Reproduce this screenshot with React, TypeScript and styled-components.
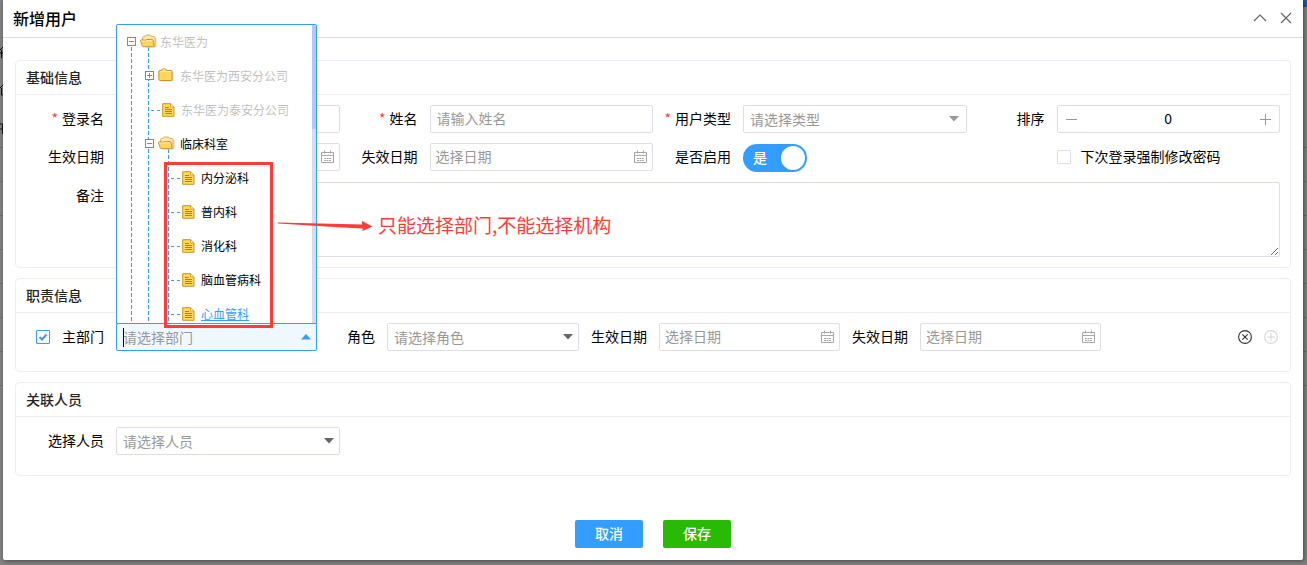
import React, { useState } from 'react';
import styled, { createGlobalStyle, css } from 'styled-components';

const color = {
  primary: '#339eff',
  success: '#28ba05',
  text: '#000',
  heading: '#262626',
  placeholder: '#999',
  border: '#dcdfe6',
  cardBorder: '#ebedf5',
  mark: '#ff3c38',
};

const Global = createGlobalStyle`
  * { box-sizing: border-box; }
  body {
    margin: 0;
    background: #808080;
    color: ${color.text};
    font: 14px/20px "Noto Sans CJK SC", sans-serif;
  }
  input, select, textarea, button { font: inherit; color: inherit; }
`;

/* ---------- page behind the dialog ---------- */

const Page = styled.div`
  position: relative;
  min-height: 100vh;
  padding: 0 4px 5px 3px;
  overflow: hidden;
`;

const Underlay = styled.div`
  position: absolute;
  inset: 0;
  background: repeating-linear-gradient(
    to bottom,
    transparent 0 33px,
    #6d6d6d 33px 34px
  ) 0 114px / 100% 272px no-repeat;
`;

const TopBar = styled.div`
  height: 7px;
  margin-left: 50%;
  background: #1b5a96;
`;

const EdgeMarks = styled.svg`
  position: absolute;
  left: 0;
  top: 44px;
`;

/* ---------- dialog ---------- */

const Dialog = styled.main`
  position: relative;
  background: #fff;
  border-radius: 0 0 2px 2px;
  box-shadow: 1px 1px 4px rgba(0, 0, 0, 0.45);
`;

const DialogHeader = styled.header`
  display: flex;
  align-items: center;
  justify-content: space-between;
  height: 38px;
  padding: 0 10px 2px;
  border-bottom: 1px solid #dcdcdc;
`;

const DialogTitle = styled.h1`
  margin: 0;
  font-size: 16px;
  line-height: 24px;
  font-weight: 500;
`;

const HeaderActions = styled.div`
  display: flex;
  gap: 12px;
`;

const IconButton = styled.button<{ $tone?: string }>`
  display: flex;
  align-items: center;
  justify-content: center;
  width: 14px;
  height: 16px;
  padding: 0;
  border: 0;
  background: none;
  color: ${(p) => p.$tone ?? '#666'};
  cursor: pointer;
`;

const DialogBody = styled.form`
  display: flex;
  flex-direction: column;
  gap: 10px;
  padding: 22px 12px 12px;
`;

const Card = styled.section`
  border: 1px solid ${color.cardBorder};
  border-radius: 4px;
`;

const CardTitle = styled.h2`
  margin: 0;
  padding: 0 10px;
  height: 34px;
  border-bottom: 1px solid ${color.cardBorder};
  color: ${color.heading};
  font-size: 14px;
  line-height: 33px;
  font-weight: 500;
`;

const FieldGrid = styled.div`
  display: grid;
  grid-template-columns: repeat(4, minmax(0, 1fr));
  gap: 10px 0;
  padding: 10px;
`;

const SingleRow = styled(FieldGrid)`
  padding-bottom: 20px;
`;

const DutyRow = styled.div`
  display: grid;
  grid-template-columns:
    90px minmax(0, 201fr) 70px minmax(0, 192fr) 80px minmax(0, 181fr)
    80px minmax(0, 181fr) 179px;
  padding: 10px 10px 20px;
`;

const Field = styled.div<{ $wide?: boolean }>`
  display: grid;
  grid-template-columns: 90px minmax(0, 1fr);
  ${(p) => p.$wide && css`grid-column: 1 / -1;`}
`;

const Label = styled.label<{ $required?: boolean }>`
  height: 28px;
  padding-right: 12px;
  line-height: 26px;
  text-align: right;
  white-space: nowrap;
  ${(p) =>
    p.$required &&
    css`
      &::before {
        content: '*';
        margin-right: 4px;
        color: #f5403c;
      }
    `}
`;

/* ---------- controls ---------- */

const controlBox = css`
  display: block;
  width: 100%;
  height: 28px;
  border: 1px solid ${color.border};
  border-radius: 2px;
  background: #fff;
  outline: 0;
  &::placeholder { color: ${color.placeholder}; opacity: 1; }
`;

const ControlWrap = styled.div`
  position: relative;
  height: 28px;
`;

const TextInput = styled.input`
  ${controlBox}
  padding: 0 6px 2px;
`;

const DateInput = styled.input`
  ${controlBox}
  padding: 0 28px 2px 5px;
`;

const SelectInput = styled.select`
  ${controlBox}
  padding: 0 24px 0 6px;
  appearance: none;
  color: ${color.placeholder};
`;

const ComboInput = styled.input`
  ${controlBox}
  padding: 0 24px 0 6px;
  border-color: ${color.primary};
  background: #f0f8ff;
`;

const Caret = styled.span`
  position: absolute;
  left: 7px;
  top: 5px;
  width: 1px;
  height: 19px;
  background: #000;
`;

const Suffix = styled.span<{ $tone: string; $right: number }>`
  position: absolute;
  top: 0;
  right: ${(p) => p.$right}px;
  display: flex;
  align-items: center;
  height: 28px;
  color: ${(p) => p.$tone};
  pointer-events: none;
`;

const NoteArea = styled.textarea`
  ${controlBox}
  height: 75px;
  padding: 4px 6px;
  resize: both;
`;

const Stepper = styled.div`
  display: flex;
  align-items: center;
  height: 28px;
  padding: 0 7px;
  border: 1px solid ${color.border};
  border-radius: 2px;
`;

const StepperInput = styled.input`
  flex: 1;
  min-width: 0;
  padding: 0 0 2px;
  border: 0;
  outline: 0;
  background: none;
  text-align: center;
`;

const Tick = styled.input`
  appearance: none;
  flex: none;
  width: 14px;
  height: 14px;
  margin: 0;
  border: 1px solid ${color.border};
  border-radius: 1px;
  background: #fff;
  &:checked {
    border-color: ${color.primary};
    background: url("data:image/svg+xml,%3Csvg xmlns='http://www.w3.org/2000/svg' viewBox='0 0 12 12'%3E%3Cpath d='M2.5 6l2.5 2.5L9.5 3.500' fill='none' stroke='%23339eff' stroke-width='2'/%3E%3C/svg%3E");
  }
`;

const TickText = styled.span`
  padding-bottom: 2px;
`;

const TickLabel = styled.label`
  grid-column: 2;
  display: flex;
  align-items: center;
  gap: 10px;
  height: 28px;
  white-space: nowrap;
`;

const DutyLabel = styled.label`
  display: flex;
  align-items: center;
  justify-content: flex-end;
  gap: 12px;
  height: 28px;
  padding-right: 12px;
  white-space: nowrap;
`;

const Switch = styled.label`
  position: relative;
  width: 64px;
  height: 28px;
  margin-top: 1px;
  padding: 0 10px;
  border-radius: 14px;
  background: ${color.primary};
  color: #fff;
  line-height: 26px;
  font-weight: 500;
`;

const SwitchInput = styled.input`
  appearance: none;
  position: absolute;
  top: 2px;
  right: 2px;
  width: 24px;
  height: 24px;
  margin: 0;
  border-radius: 12px;
  background: #fff;
`;

const RowActions = styled.div`
  display: flex;
  align-items: center;
  justify-content: flex-end;
  gap: 12px;
  padding-right: 2px;
`;

const Footer = styled.footer`
  display: flex;
  justify-content: center;
  gap: 20px;
  padding-top: 34px;
`;

const Button = styled.button<{ $bg: string }>`
  width: 68px;
  height: 28px;
  padding: 0 0 2px;
  border: 0;
  border-radius: 2px;
  background: ${(p) => p.$bg};
  color: #fff;
  font-weight: 500;
  cursor: pointer;
`;

/* ---------- department tree ---------- */

const TreePanel = styled.div`
  position: absolute;
  z-index: 2;
  left: 0;
  right: 0;
  bottom: 27px;
  display: flex;
  height: 300px;
  border: 1px solid ${color.primary};
  border-radius: 2px 2px 0 0;
  background: #fff;
  overflow: hidden;
`;

const TreeScroll = styled.div`
  flex: 1;
  min-width: 0;
  overflow: hidden;
`;

const ScrollTrack = styled.div`
  width: 4px;
  background: #d3dcf0;
`;

const ScrollThumb = styled.div`
  height: 104px;
  background: #b0c9f8;
`;

const TreeList = styled.ul<{ $indent: number }>`
  margin: 0;
  padding: 0 0 0 ${(p) => p.$indent}px;
  list-style: none;
`;

const guideLine = css`
  content: '';
  position: absolute;
  top: 22px;
  bottom: 0;
  width: 1px;
  background: repeating-linear-gradient(${color.primary} 0 4px, transparent 4px 6px);
`;

const TreeItem = styled.li<{ $guide?: number }>`
  position: relative;
  ${(p) =>
    p.$guide !== undefined &&
    css`
      &::before {
        ${guideLine}
        left: ${p.$guide}px;
      }
    `}
`;

const RootItem = styled(TreeItem)`
  &::after {
    ${guideLine}
    left: 4px;
  }
`;

const TreeRow = styled.div<{ $disabled?: boolean; $active?: boolean }>`
  position: relative;
  z-index: 1;
  display: flex;
  align-items: center;
  height: 34px;
  font-size: 12px;
  color: ${(p) => (p.$disabled ? '#bfbfbf' : p.$active ? color.primary : '#000')};
  text-decoration: ${(p) => (p.$active ? 'underline' : 'none')};
  white-space: nowrap;
  svg { flex: none; }
`;

const TreeText = styled.span<{ $gap: number }>`
  margin-left: ${(p) => p.$gap}px;
  line-height: 18px;
`;

const Expander = styled.button<{ $open?: boolean }>`
  flex: none;
  width: 9px;
  height: 9px;
  margin: 0 4px 2px 0;
  padding: 0;
  border: 1px solid ${color.primary};
  background:
    linear-gradient(${color.primary}, ${color.primary}) 1px 3px / 5px 1px no-repeat,
    ${(p) => !p.$open && `linear-gradient(${color.primary}, ${color.primary}) 3px 1px / 1px 5px no-repeat,`}
    #fff;
`;

const LeafDash = styled.span`
  width: 9px;
  height: 1px;
  margin: 0 2px 0 1px;
  background: repeating-linear-gradient(to right, ${color.primary} 0 3px, transparent 3px 6px);
`;

/* ---------- annotation ---------- */

const MarkBox = styled.div`
  position: absolute;
  z-index: 3;
  left: 48px;
  bottom: 23px;
  width: 109px;
  height: 166px;
  border: 3px solid ${color.mark};
  pointer-events: none;
`;

const MarkNote = styled.div`
  position: absolute;
  z-index: 3;
  left: 162px;
  bottom: 112px;
  display: flex;
  align-items: center;
  gap: 5px;
  color: ${color.mark};
  font-size: 19px;
  line-height: 28px;
  white-space: nowrap;
  pointer-events: none;
`;

/* ---------- icons ---------- */

const FolderSvg = styled.svg`
  margin-bottom: 2px;
`;

const Arrow = ({ up }: { up?: boolean }) => (
  <svg width="10" height="6" viewBox="0 0 10 6" aria-hidden="true">
    <path d={up ? 'M0 5.500L5 0l5 5.500z' : 'M0 0h10L5 5.500z'} fill="currentColor" />
  </svg>
);

const Calendar = () => (
  <svg width="13" height="14" viewBox="0 0 13 14" fill="none" stroke="#a6a6a6" aria-hidden="true">
    <path d="M.5 2.500h12v10H.5zM.5 5.500h12M3.500.5v3M9.500.5v3" />
    <path d="M3 8.500h7M3 10.500h7" strokeDasharray="2 .5" />
  </svg>
);

const FolderOpen = () => (
  <FolderSvg width="17" height="14" viewBox="0 0 17 14" aria-hidden="true">
    <path d="M16 4.500v8.500H5" fill="none" stroke="#ddd5c2" />
    <path d="M2.500 7V3.300L3.300 2.500 5 2.300 6.500 1h4l1 1.300 3 .4.6.7v8.300l-1 .8H9z" fill="#fbe6ae" stroke="#cda043" strokeWidth=".8" />
    <path d="M.4 6.400l.7-.6 4.400.4 1-.7h6l.5.5 1.200 6-.5.7H3l-.7-.5z" fill="#ffd65c" stroke="#bf8a24" strokeWidth=".8" />
    <path d="M1.500 7l4.400.2 1-.6h5.300" fill="none" stroke="#fff0b8" strokeWidth=".8" />
  </FolderSvg>
);

const Folder = () => (
  <FolderSvg width="16" height="14" viewBox="0 0 16 14" aria-hidden="true">
    <path d="M15 4v9H3" fill="none" stroke="#d9cfb6" />
    <path d="M.8 11.500V3.200L2 2.500h1.500L4.200 1h3.600l.8 1.500H13.500l.6.7v8.600l-.7.700H1.600z" fill="#ffd75e" stroke="#c08a26" strokeWidth=".9" />
    <path d="M2 3.600h11M4.800 2h2.800" stroke="#ffeeb0" strokeWidth=".8" />
  </FolderSvg>
);

const FileIcon = () => (
  <svg width="13" height="14" viewBox="0 0 13 14" aria-hidden="true">
    <path d="M.7.7H8.500L12 4v9.300H.7z" fill="#ffd75e" stroke="#c9971f" />
    <path d="M8.500.7V4H12" fill="#fff0b8" stroke="#c9971f" strokeWidth=".8" />
    <path d="M3 4.500h4M3 6.500h7M3 8.500h7M3 10.500h7" stroke="#b5820f" />
  </svg>
);

/* ---------- composed parts ---------- */

const DateBox = ({ id }: { id: string }) => (
  <ControlWrap>
    <DateInput id={id} placeholder="选择日期" />
    <Suffix $tone="#a6a6a6" $right={6}><Calendar /></Suffix>
  </ControlWrap>
);

const SelectBox = ({ id, text, muted }: { id: string; text: string; muted?: boolean }) => (
  <ControlWrap>
    <SelectInput id={id} defaultValue="">
      <option value="">{text}</option>
    </SelectInput>
    <Suffix $tone={muted ? '#999' : '#666'} $right={muted ? 8 : 6}><Arrow /></Suffix>
  </ControlWrap>
);

const departments = ['内分泌科', '普内科', '消化科', '脑血管病科', '心血管科'];

const DepartmentTree = () => (
  <TreePanel>
    <TreeScroll id="dept-tree">
      <TreeList $indent={10}>
        <RootItem $guide={21}>
          <TreeRow $disabled>
            <Expander type="button" $open aria-label="收起" />
            <FolderOpen />
            <TreeText $gap={3}>东华医为</TreeText>
          </TreeRow>
          <TreeList $indent={18}>
            <TreeItem>
              <TreeRow $disabled>
                <Expander type="button" aria-label="展开" />
                <Folder />
                <TreeText $gap={6}>东华医为西安分公司</TreeText>
              </TreeRow>
            </TreeItem>
            <TreeItem>
              <TreeList $indent={5}>
                <TreeRow as="li" $disabled>
                  <LeafDash />
                  <FileIcon />
                  <TreeText $gap={6}>东华医为泰安分公司</TreeText>
                </TreeRow>
              </TreeList>
            </TreeItem>
            <TreeItem $guide={23}>
              <TreeRow>
                <Expander type="button" $open aria-label="收起" />
                <FolderOpen />
                <TreeText $gap={5}>临床科室</TreeText>
              </TreeRow>
              <TreeList $indent={25}>
                {departments.map((name) => (
                  <TreeRow as="li" key={name} $active={name === '心血管科'}>
                    <LeafDash />
                    <FileIcon />
                    <TreeText $gap={6}>{name}</TreeText>
                  </TreeRow>
                ))}
              </TreeList>
            </TreeItem>
          </TreeList>
        </RootItem>
      </TreeList>
    </TreeScroll>
    <ScrollTrack><ScrollThumb /></ScrollTrack>
  </TreePanel>
);

export default function App() {
  const [order, setOrder] = useState(0);

  return (
    <Page>
      <Global />
      <Underlay>
        <TopBar />
        <EdgeMarks width="3" height="94" viewBox="0 0 3 94" stroke="#111" fill="none" aria-hidden="true">
          <path d="M0 6l3-3M1.500 6v8M0 9h3M0 44l3-3M1.500 44v7h2M0 80h2.500v10M0 85h2" />
        </EdgeMarks>
      </Underlay>
      <Dialog>
        <DialogHeader>
          <DialogTitle>新增用户</DialogTitle>
          <HeaderActions>
            <IconButton type="button" aria-label="折叠">
              <svg width="14" height="14" viewBox="0 0 14 14" fill="none" stroke="currentColor" strokeWidth="1.200">
                <path d="M1 10l6-6 6 6" />
              </svg>
            </IconButton>
            <IconButton type="button" aria-label="关闭">
              <svg width="14" height="14" viewBox="0 0 14 14" fill="none" stroke="currentColor" strokeWidth="1.200">
                <path d="M2 2l10 10M12 2L2 12" />
              </svg>
            </IconButton>
          </HeaderActions>
        </DialogHeader>

        <DialogBody>
          <Card>
            <CardTitle>基础信息</CardTitle>
            <FieldGrid>
              <Field>
                <Label $required htmlFor="login">登录名</Label>
                <TextInput id="login" />
              </Field>
              <Field>
                <Label $required htmlFor="name">姓名</Label>
                <TextInput id="name" placeholder="请输入姓名" />
              </Field>
              <Field>
                <Label $required htmlFor="type">用户类型</Label>
                <SelectBox id="type" text="请选择类型" muted />
              </Field>
              <Field>
                <Label htmlFor="order">排序</Label>
                <Stepper>
                  <IconButton type="button" $tone="#999" aria-label="减少" onClick={() => setOrder(order - 1)}>
                    <svg width="12" height="12" viewBox="0 0 12 12" stroke="currentColor"><path d="M0 6.500h11" /></svg>
                  </IconButton>
                  <StepperInput id="order" value={order} onChange={(e) => setOrder(Number(e.target.value) || 0)} />
                  <IconButton type="button" $tone="#999" aria-label="增加" onClick={() => setOrder(order + 1)}>
                    <svg width="12" height="12" viewBox="0 0 12 12" stroke="currentColor"><path d="M1 6.500h11M6.500 1v11" /></svg>
                  </IconButton>
                </Stepper>
              </Field>
              <Field>
                <Label htmlFor="start">生效日期</Label>
                <DateBox id="start" />
              </Field>
              <Field>
                <Label htmlFor="end">失效日期</Label>
                <DateBox id="end" />
              </Field>
              <Field>
                <Label htmlFor="enabled">是否启用</Label>
                <Switch>
                  是
                  <SwitchInput id="enabled" type="checkbox" role="switch" defaultChecked />
                </Switch>
              </Field>
              <Field>
                <TickLabel>
                  <Tick type="checkbox" />
                  <TickText>下次登录强制修改密码</TickText>
                </TickLabel>
              </Field>
              <Field $wide>
                <Label htmlFor="note">备注</Label>
                <NoteArea id="note" />
              </Field>
            </FieldGrid>
          </Card>

          <Card>
            <CardTitle>职责信息</CardTitle>
            <DutyRow>
              <DutyLabel>
                <Tick type="checkbox" defaultChecked />
                <TickText>主部门</TickText>
              </DutyLabel>
              <ControlWrap>
                <ComboInput
                  role="combobox"
                  aria-label="部门"
                  aria-expanded="true"
                  aria-controls="dept-tree"
                  placeholder="请选择部门"
                />
                <Caret />
                <Suffix $tone={color.primary} $right={6}><Arrow up /></Suffix>
                <DepartmentTree />
                <MarkBox />
                <MarkNote>
                  <svg width="95" height="14" viewBox="0 0 95 14" fill="currentColor" aria-hidden="true">
                    <path d="M0 4.500L84 6.500V3L94.500 8.500 84.500 13V10.500L60 9.200 0 5.500z" />
                  </svg>
                  只能选择部门,不能选择机构
                </MarkNote>
              </ControlWrap>
              <Label htmlFor="role">角色</Label>
              <SelectBox id="role" text="请选择角色" />
              <Label htmlFor="duty-start">生效日期</Label>
              <DateBox id="duty-start" />
              <Label htmlFor="duty-end">失效日期</Label>
              <DateBox id="duty-end" />
              <RowActions>
                <IconButton type="button" $tone="#333" aria-label="删除">
                  <svg width="14" height="14" viewBox="0 0 14 14" fill="none" stroke="currentColor" strokeWidth="1.100">
                    <circle cx="7" cy="7" r="6.400" />
                    <path d="M4.300 4.300l5.400 5.400M9.700 4.300l-5.400 5.400" />
                  </svg>
                </IconButton>
                <IconButton type="button" $tone="#d6d6d6" aria-label="添加">
                  <svg width="14" height="14" viewBox="0 0 14 14" fill="none" stroke="currentColor" strokeWidth="1.100">
                    <circle cx="7" cy="7" r="6.400" />
                    <path d="M3 7h8M7 3v8" />
                  </svg>
                </IconButton>
              </RowActions>
            </DutyRow>
          </Card>

          <Card>
            <CardTitle>关联人员</CardTitle>
            <SingleRow>
              <Field>
                <Label htmlFor="person">选择人员</Label>
                <SelectBox id="person" text="请选择人员" />
              </Field>
            </SingleRow>
          </Card>

          <Footer>
            <Button type="button" $bg={color.primary}>取消</Button>
            <Button type="button" $bg={color.success}>保存</Button>
          </Footer>
        </DialogBody>
      </Dialog>
    </Page>
  );
}
